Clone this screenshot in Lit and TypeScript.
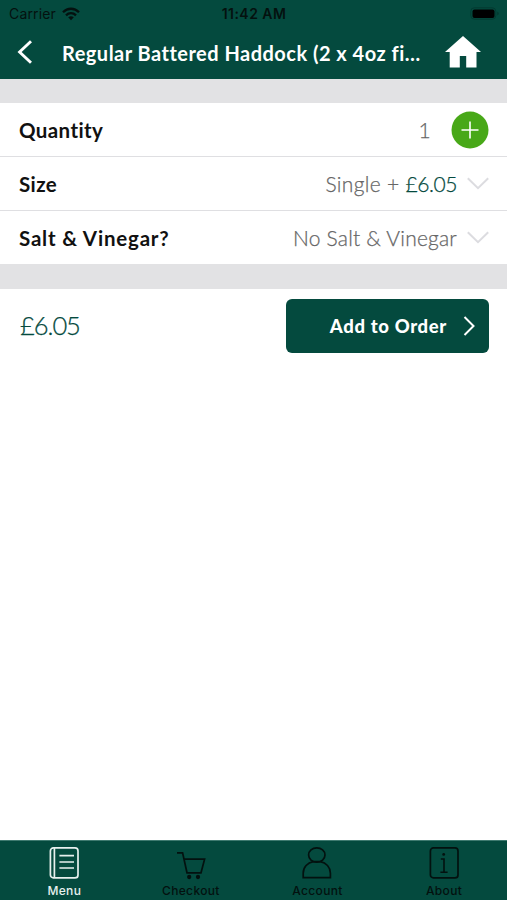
import { LitElement, html, css, svg } from "lit";
import { customElement } from "lit/decorators.js";

const chevronDown = html`<svg class="chev" width="22" height="14" viewBox="0 0 22 14" fill="none" stroke="#dcdce0" stroke-width="2"><path d="M.8 1.2 11 11.2 21.2 1.2" /></svg>`;

const tabs = [
  {
    label: "Menu", cls: "menu",
    icon: svg`<rect x="3.400" y="1.900" width="27.600" height="30" rx="3"/><path d="M7.400 2v30M12.400 9.600h14.600M12.400 16h14.600M12.400 22h14.600"/>`,
  },
  {
    label: "Checkout", cls: "checkout",
    icon: svg`<path d="M3 6.800h5.600l4.400 20h14l3.600-13.600H10"/><circle cx="15.200" cy="31" r="1.300" fill="currentColor"/><circle cx="24" cy="31" r="1.300" fill="currentColor"/>`,
  },
  {
    label: "Account", cls: "account",
    icon: svg`<ellipse cx="16.800" cy="9" rx="8.200" ry="7.100"/><path d="M3.200 31.700v-4.500c0-6 4.400-10.600 10-11.500h7.200c5.600.900 10 5.500 10 11.500v4.500z"/>`,
  },
  {
    label: "About", cls: "about",
    icon: svg`<rect x="3.400" y="1.900" width="27.600" height="30" rx="3"/><path d="M13.800 13h3.200v13.200M13.400 26.200h7.200" stroke-width="1.600"/><circle cx="16.700" cy="8.400" r="1.400" fill="currentColor" stroke="none"/>`,
  },
];

@customElement("app-root")
export class AppRoot extends LitElement {
  static styles = css`
    :host { display: flex; flex-direction: column; height: 900px; background: #fff; font-family: Lato, sans-serif; overflow: hidden; }
    * { box-sizing: border-box; }
    svg { display: block; flex: none; }
    span, h1 { white-space: nowrap; }
    .top { height: 79px; background: #044a3e; flex: none; }
    .status { height: 27px; display: grid; grid-template-columns: 1fr auto 1fr; align-items: center; padding: 1px 8px 0 9px; font: 14px/20px Inter, sans-serif; color: #04110f; }
    .carrier { display: flex; gap: 6px; align-items: center; }
    .carrier span { letter-spacing: .15px; }
    .time { font-weight: 600; letter-spacing: .45px; }
    .battery { justify-self: end; }
    .nav { height: 50px; display: flex; align-items: center; padding: 0 26px 0 17px; color: #fff; }
    h1 { margin: 1px 0 0 29px; width: 359px; font-size: 20px; line-height: 28px; font-weight: 700; letter-spacing: .48px; }
    .home { margin-left: auto; }
    .gap { height: 25px; background: #e2e2e4; flex: none; }
    .gap.first { height: 24px; }
    .row { height: 54px; flex: none; display: flex; align-items: center; padding: 0 18px 0 19px; border-bottom: 1px solid #dfdfe2; }
    .row.last { border: 0; height: 53px; }
    .label { font-weight: 700; font-size: 20.5px; color: #111; letter-spacing: .4px; }
    .last .label { letter-spacing: .8px; }
    .value { margin-left: auto; font-size: 21px; font-weight: 300; color: #666; letter-spacing: .3px; -webkit-text-stroke: .25px currentColor; }
    .last .value { letter-spacing: .2px; }
    .price { color: #044a3e; letter-spacing: -.4px; }
    .chev { margin-left: 10px; }
    .plus { margin-left: 20px; }
    .order { display: flex; justify-content: space-between; padding: 10px 18px 0 20px; flex: 1; }
    .total { font-size: 25.5px; font-weight: 300; line-height: 53px; color: #044a3e; letter-spacing: -1.05px; -webkit-text-stroke: .25px currentColor; }
    .add { width: 203px; height: 54px; border-radius: 6px; background: #044a3e; color: #fff; display: flex; align-items: center; justify-content: flex-end; padding-right: 14px; font-size: 18.5px; font-weight: 900; gap: 16px; letter-spacing: .65px; }
    .tabs { height: 60px; flex: none; background: #044a3e; display: grid; grid-template-columns: repeat(4, 126.600px); border-top: 1px solid #3f7a70; color: #03110f; }
    .tab { display: flex; flex-direction: column; align-items: center; padding: 5px 0 0 2px; font: 500 12px/16px Inter, sans-serif; }
    .tab svg { height: 36px; width: 34px; }
    .tab span { margin-top: 1px; letter-spacing: .35px; }
    .tab.menu { color: #e6f0ee; }
  `;

  render() {
    return html`
      <header class="top">
        <div class="status">
          <div class="carrier"><span>Carrier</span>
            <svg width="18" height="14" viewBox="0 0 18 14" fill="none" stroke="currentColor" stroke-width="2.300"><path d="M1 5.200c4.600-4.600 11.400-4.600 16 0M4 8.300c2.900-2.800 7.100-2.800 10 0"/><path d="M6.200 10.300q2.800-2.200 5.600 0L9 13.200z" fill="currentColor" stroke="none"/></svg>
          </div>
          <span class="time">11:42 AM</span>
          <svg class="battery" width="29" height="14" viewBox="0 0 29 14"><rect x=".8" y=".8" width="25" height="11.400" rx="3.500" fill="none" stroke="#033a31"/><rect x="2.500" y="2.500" width="22" height="8.400" rx="2" fill="#000"/><path d="M27.200 4.500v4q1.500-.5 1.500-2t-1.500-2" fill="#033a31"/></svg>
        </div>
        <nav class="nav">
          <svg width="16" height="24" viewBox="0 0 16 24" fill="none" stroke="#fff" stroke-width="2.900"><path d="M14 1.200 2.600 12 14 22.800"/></svg>
          <h1>Regular Battered Haddock (2 x 4oz fi…</h1>
          <svg class="home" width="36" height="32" viewBox="0 0 36 32" fill="#fff"><path d="M18 0 36 16h-4.500v15.500H21.200V20h-6.400v11.500H4.700V16H0z"/></svg>
        </nav>
      </header>
      <div class="gap first"></div>
      <div class="row"><span class="label">Quantity</span><span class="value">1</span>
        <svg class="plus" width="38" height="38" viewBox="0 0 38 38"><circle cx="19" cy="19" r="18.500" fill="#48a818"/><path d="M10.500 19h17M19 10.500v17" stroke="#fff" stroke-width="1.600"/></svg>
      </div>
      <div class="row"><span class="label">Size</span><span class="value">Single + <span class="price">£6.05</span></span>${chevronDown}</div>
      <div class="row last"><span class="label">Salt &amp; Vinegar?</span><span class="value">No Salt &amp; Vinegar</span>${chevronDown}</div>
      <div class="gap"></div>
      <section class="order">
        <span class="total">£6.05</span>
        <div class="add"><span>Add to Order</span>
          <svg width="12" height="20" viewBox="0 0 12 20" fill="none" stroke="#fff" stroke-width="2"><path d="M1.500 1 10.500 10 1.500 19"/></svg>
        </div>
      </section>
      <footer class="tabs">
        ${tabs.map((t) => html`<div class="tab ${t.cls}"><svg viewBox="0 0 34 36" fill="none" stroke="currentColor" stroke-width="1.700">${t.icon}</svg><span>${t.label}</span></div>`)}
      </footer>
    `;
  }
}
